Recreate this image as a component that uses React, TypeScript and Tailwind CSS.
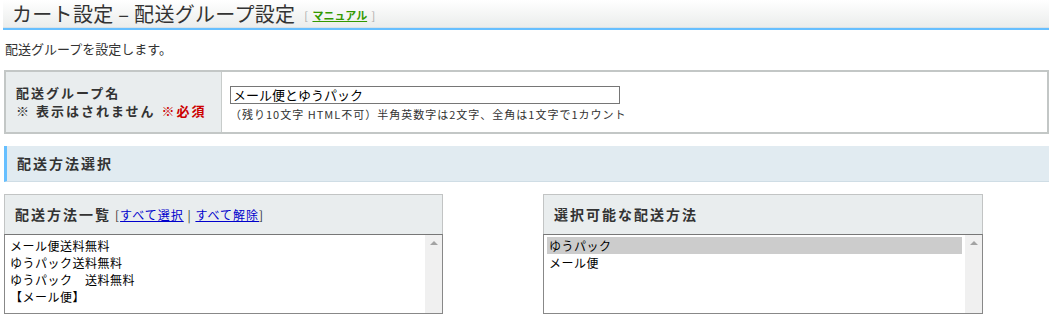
const font = "font-['Noto_Sans_CJK_JP','Noto_Sans',sans-serif]";

const carriers = ["メール便送料無料", "ゆうパック送料無料", "ゆうパック　送料無料", "【メール便】"];
const selectable = ["ゆうパック", "メール便"];

function ScrollBar() {
  return (
    <div className="flex w-[17px] shrink-0 justify-center bg-[#f0f0f0] pt-[6px]">
      <div className="h-0 w-0 border-x-[4px] border-b-[4px] border-x-transparent border-b-[#a3a3a3]" />
    </div>
  );
}

function ListBox({ items, selected }: { items: string[]; selected?: number }) {
  return (
    <div className="flex h-[80px] border border-[#888] border-t-[#777] bg-white">
      <div className="flex-1 px-[3px] pt-[2px] text-[12px] leading-[17px] tracking-[0.5px] text-black">
        {items.map((item, i) => (
          <div key={item} className={i === selected ? "bg-[#cccccc] pl-[2px]" : "pl-[2px]"}>
            {item}
          </div>
        ))}
      </div>
      <ScrollBar />
    </div>
  );
}

function PanelHead({ children }: { children: React.ReactNode }) {
  return (
    <div className="flex h-[40px] items-center border border-b-0 border-[#c2c4c4] bg-[#e9edee] px-[10px]">
      {children}
    </div>
  );
}

export default function App() {
  return (
    <div className={`${font} w-[1060px] bg-white pl-[4px] pr-[11px] text-[#333]`}>
      {/* page header */}
      <div className="-ml-[1px] border-b-[2px] border-[#66bfff]">
        <div className="flex h-[28px] items-center border-b border-[#d8e2e8] bg-gradient-to-b from-white to-[#ebedec] pl-[9px]">
          <h1 className="text-[20px] leading-none tracking-[0.3px] text-[#333]">カート設定 – 配送グループ設定</h1>
          <span className="ml-[9px] mt-[3px] text-[11px] text-[#aaa]">
            [{" "}
            <a href="#" className="mx-[2px] font-bold text-[#339900] underline">
              マニュアル
            </a>{" "}
            ]
          </span>
        </div>
      </div>

      <p className="mt-[10px] pl-[1px] text-[13px] leading-[18px]">配送グループを設定します。</p>

      {/* group name */}
      <div className="mt-[12px] flex h-[64px] border-[2px] border-[#c3c7c6]">
        <div className="flex w-[216px] flex-col justify-center border-r border-[#c8cccb] bg-[#e9edee] pl-[10px] text-[13px] font-bold leading-[18px] tracking-[2px]">
          <div>配送グループ名</div>
          <div>
            ※ 表示はされません<span className="ml-[6px] text-[#cc0000]">※必須</span>
          </div>
        </div>
        <div className="flex flex-col justify-center pl-[8px] pt-[2px]">
          <input
            readOnly
            value="メール便とゆうパック"
            className="h-[18px] w-[390px] border border-[#767676] px-[2px] text-[13px] leading-[16px] text-black outline-none"
          />
          <span className="mt-[3px] text-[11px] leading-[14px] tracking-[1px]">
            （残り10文字 HTML不可）半角英数字は2文字、全角は1文字で1カウント
          </span>
        </div>
      </div>

      {/* section */}
      <div className="mt-[12px] flex h-[36px] items-center border-b border-l-[3px] border-[#cfdde5] border-l-[#66bfff] bg-[#e1ebf1] pl-[10px] text-[14px] font-bold tracking-[2px]">
        配送方法選択
      </div>

      <div className="mt-[12px] flex gap-[100px]">
        <div className="w-[439px]">
          <PanelHead>
            <span className="text-[14px] font-bold tracking-[2px]">配送方法一覧</span>
            <span className="ml-[4px] text-[12px] tracking-[1px] text-[#333]">
              [
              <a href="#" className="text-[#0000cc] underline">
                すべて選択
              </a>{" "}
              |{" "}
              <a href="#" className="text-[#0000cc] underline">
                すべて解除
              </a>
              ]
            </span>
          </PanelHead>
          <ListBox items={carriers} />
        </div>
        <div className="w-[440px]">
          <PanelHead>
            <span className="text-[14px] font-bold tracking-[2px]">選択可能な配送方法</span>
          </PanelHead>
          <ListBox items={selectable} selected={0} />
        </div>
      </div>
    </div>
  );
}
